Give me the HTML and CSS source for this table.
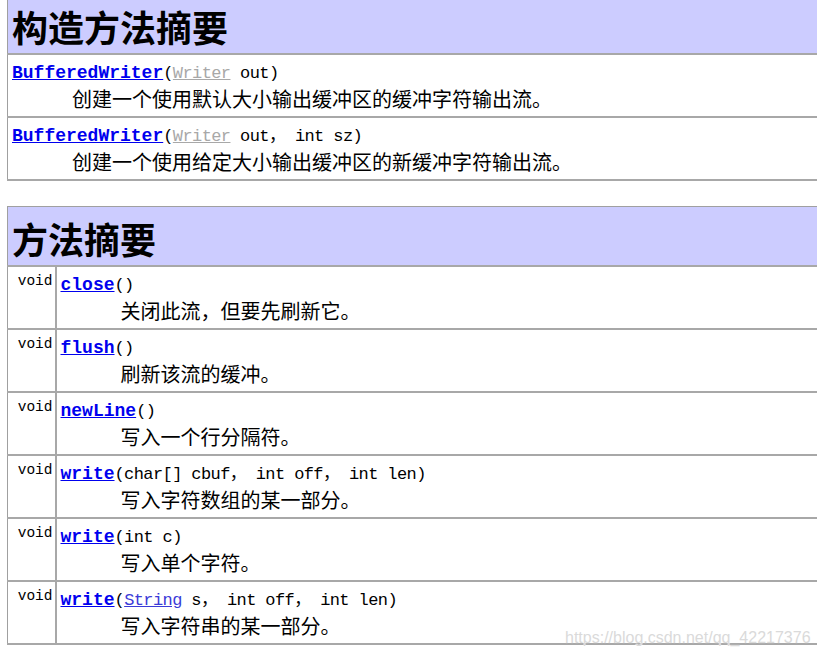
FILE: index.html
```html
<!DOCTYPE html>
<html>
<head>
<meta charset="utf-8">
<link rel="stylesheet" href="styles.css">
</head>
<body>
<div class="page">
  <table class="summary first">
    <tr><th class="head">构造方法摘要</th></tr>
    <tr><td class="cell">
      <div class="sig"><a class="lnk">BufferedWriter</a>(<a class="type-dim">Writer</a> out)</div>
      <div class="desc">创建一个使用默认大小输出缓冲区的缓冲字符输出流。</div>
    </td></tr>
    <tr><td class="cell">
      <div class="sig"><a class="lnk">BufferedWriter</a>(<a class="type-dim">Writer</a> out， int sz)</div>
      <div class="desc">创建一个使用给定大小输出缓冲区的新缓冲字符输出流。</div>
    </td></tr>
  </table>

  <table class="summary second">
    <tr><th class="head head-tall" colspan="2">方法摘要</th></tr>
    <tr><td class="ret">void</td><td class="cell">
      <div class="sig"><a class="lnk">close</a>()</div>
      <div class="desc">关闭此流，但要先刷新它。</div>
    </td></tr>
    <tr><td class="ret">void</td><td class="cell">
      <div class="sig"><a class="lnk">flush</a>()</div>
      <div class="desc">刷新该流的缓冲。</div>
    </td></tr>
    <tr><td class="ret">void</td><td class="cell">
      <div class="sig"><a class="lnk">newLine</a>()</div>
      <div class="desc">写入一个行分隔符。</div>
    </td></tr>
    <tr><td class="ret">void</td><td class="cell">
      <div class="sig"><a class="lnk">write</a>(char[] cbuf， int off， int len)</div>
      <div class="desc">写入字符数组的某一部分。</div>
    </td></tr>
    <tr><td class="ret">void</td><td class="cell">
      <div class="sig"><a class="lnk">write</a>(int c)</div>
      <div class="desc">写入单个字符。</div>
    </td></tr>
    <tr><td class="ret">void</td><td class="cell">
      <div class="sig"><a class="lnk">write</a>(<a class="type-link">String</a> s， int off， int len)</div>
      <div class="desc">写入字符串的某一部分。</div>
    </td></tr>
  </table>
  <div class="watermark">https://blog.csdn.net/qq_42217376</div>
</div>
</body>
</html>
```

FILE: styles.css
```css
html, body {
  margin: 0;
  padding: 0;
  background: #ffffff;
  overflow: hidden;
}
.page {
  position: relative;
  width: 817px;
  height: 657px;
  overflow: hidden;
  padding-left: 7px;
  box-sizing: border-box;
}
.summary {
  border-collapse: collapse;
  width: 830px;
  border: 1px solid #a0a0a0;
  font-family: "Liberation Mono", "Noto Sans CJK SC", monospace;
}
.first {
  margin-top: -6px;
}
.second {
  margin-top: 25px;
}
.head {
  background: #ccccff;
  text-align: left;
  font-family: "Noto Sans CJK SC", sans-serif;
  font-weight: 700;
  font-size: 36px;
  line-height: 42px;
  height: 59px;
  padding: 4px 4px 0 4px;
  box-sizing: border-box;
  border-bottom: 2px solid #a8a8a8;
  color: #000;
}
.head-tall {
  height: 60px;
  padding-top: 5px;
}
.cell {
  padding: 6px 4px 0 4px;
  height: 63px;
  box-sizing: border-box;
    vertical-align: top;
  border-bottom: 2px solid #a8a8a8;
}
.ret {
  width: 48px;
  padding: 5px 2px 0 0;
  text-align: right;
  vertical-align: top;
  font-size: 14.5px;
  line-height: 18px;
  color: #000;
  border-bottom: 2px solid #a8a8a8;
  border-right: 2px solid #a8a8a8;
  box-sizing: border-box;
}
.sig {
  font-size: 17px;
  letter-spacing: -0.6px;
  line-height: 24px;
  color: #000;
  white-space: nowrap;
}
.lnk {
  color: #0000ee;
  font-weight: 700;
  font-size: 18px;
  letter-spacing: 0;
  text-decoration: underline;
}
.type-dim {
  color: #a8a8a8;
  text-decoration: underline;
}
.type-link {
  color: #3b3bd8;
  text-decoration: underline;
}
.desc {
  font-family: "Noto Sans CJK SC", sans-serif;
  font-size: 20px;
  line-height: 26px;
  padding-left: 60px;
  color: #000;
  white-space: nowrap;
}
.watermark {
  position: absolute;
  left: 565px;
  top: 629px;
  font-family: "Liberation Sans", Arial, sans-serif;
  font-size: 16px;
  color: #dadada;
  text-shadow: 0 0 1px #ffffff;
  white-space: nowrap;
}
```
